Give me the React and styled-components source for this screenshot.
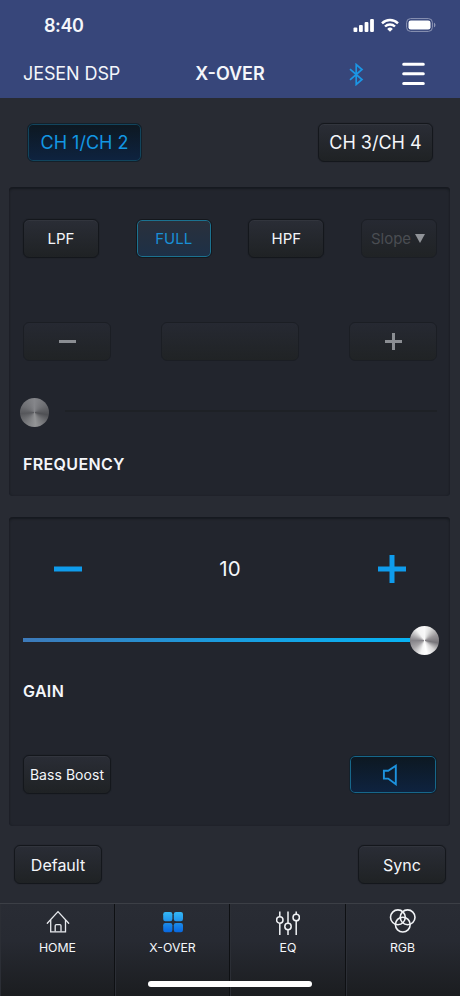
import React, { useState } from "react";
import styled, { createGlobalStyle, css } from "styled-components";

const GlobalStyle = createGlobalStyle`
  * {
    box-sizing: border-box;
  }

  body {
    margin: 0;
    background: #282b33;
    font-family: Inter, "Liberation Sans", sans-serif;
  }
`;

// Styled Components
const Screen = styled.div`
  width: 460px;
  height: 996px;
  display: flex;
  flex-direction: column;
  overflow: hidden;
  background: #282b33;
  color: #f4f6fa;
`;

const Header = styled.header`
  height: 98px;
  flex-shrink: 0;
  background: #37467a;
`;

const StatusBar = styled.div`
  height: 50px;
  padding: 1px 24px 0 44px;
  display: flex;
  align-items: center;
  justify-content: space-between;
`;

const Clock = styled.span`
  font-size: 18px;
  font-weight: 600;
  letter-spacing: -0.4px;
`;

const StatusIcons = styled.div`
  display: flex;
  align-items: center;
  gap: 7px;
  padding-bottom: 1px;

  svg {
    display: block;
  }
`;

const NavBar = styled.nav`
  height: 48px;
  padding: 0 35px 0 23px;
  display: grid;
  grid-template-columns: 142px 130px 1fr;
  align-items: center;
`;

const Brand = styled.span`
  font-size: 18px;
  line-height: 22px;
  white-space: nowrap;
  letter-spacing: -0.1px;
`;

const Title = styled.h1`
  margin: 0;
  font-size: 18px;
  line-height: 22px;
  font-weight: 600;
  text-align: center;
`;

const NavActions = styled.div`
  display: flex;
  align-items: center;
  justify-content: flex-end;
  gap: 38px;

  svg {
    display: block;
  }
`;

const Channels = styled.div`
  height: 89px;
  flex-shrink: 0;
  padding: 25px 27px 0 27px;
  display: flex;
  align-items: flex-start;
  justify-content: space-between;
`;

const activeStyle = css`
  color: #1397e3;
  background: linear-gradient(#0d1821, #0e2340);
  border-color: #14202a;
  box-shadow: inset 0 0 0 1px ${(props) => props.$glow || "#17678a"};
`;

const Button = styled.button`
  width: ${(props) => props.$width}px;
  height: 39px;
  padding: 0;
  display: flex;
  align-items: center;
  justify-content: center;
  flex-shrink: 0;
  font-family: inherit;
  font-size: ${(props) => props.$size || 16}px;
  letter-spacing: ${(props) => props.$spacing || 0}px;
  white-space: nowrap;
  color: #f4f6fa;
  background: linear-gradient(#2a2d36, #1f2224);
  border: 1px solid #14171c;
  border-radius: 6px;
  box-shadow: inset 0 1px 0 #32353d, 0 0 1px #14171c;
  cursor: pointer;

  ${(props) => props.$active && activeStyle}

  ${(props) =>
    props.$selected &&
    css`
      color: #198fd6;
      background: linear-gradient(#2a303b, #1d3047);
      box-shadow: inset 0 0 0 1px #1c7290;
    `}

  &:disabled {
    color: #4a4d52;
    background: linear-gradient(#262932, #202325);
    border-color: #1b1e24;
    box-shadow: none;
    cursor: default;
  }

  svg {
    display: block;
  }
`;

const Panel = styled.section`
  width: 441px;
  height: 309px;
  flex-shrink: 0;
  margin: 0 0 21px 9px;
  padding: 0 13px 0 14px;
  display: flex;
  flex-direction: column;
  background: #22252d;
  border-radius: 4px;
  box-shadow: inset 0 2px 2px #171a20, inset 0 0 2px #1b1e25;
`;

const Row = styled.div`
  display: flex;
  align-items: center;
  justify-content: space-between;
  margin-top: ${(props) => props.$top}px;
  height: 39px;
`;

const Slope = styled.span`
  display: flex;
  align-items: center;
  gap: 4px;
  padding-right: 2px;

  svg {
    color: #909398;
  }
`;

const Muted = styled.span`
  color: #8b8e93;
`;

const SpeakerSlot = styled.span`
  padding-right: 7px;
`;

const Slider = styled.div`
  display: flex;
  align-items: center;
  height: 30px;
  margin-top: ${(props) => props.$top}px;
`;

const Track = styled.div`
  flex: 1;
  height: 4px;
  background: linear-gradient(90deg, #3d7ab9, #1b9bdd 50%, #08b3f3);
`;

const IdleTrack = styled.div`
  flex: 1;
  height: 2px;
  margin: 0 0 3px 16px;
  background: #1e2126;
`;

const Knob = styled.div`
  width: 29px;
  height: 29px;
  flex-shrink: 0;
  margin: ${(props) => (props.$end ? "0 -2px 0 0" : "0 0 0 -3px")};
  border-radius: 50%;
  background: conic-gradient(
    #f8f8f8 0deg,
    #dedede 25deg,
    #9b989b 65deg,
    #77757a 100deg,
    #d5d4d5 135deg,
    #ffffff 170deg,
    #f5f5f5 195deg,
    #a8a6a9 235deg,
    #858388 270deg,
    #aaa8ab 290deg,
    #f3f3f3 325deg,
    #f8f8f8 360deg
  );

  ${(props) =>
    props.$dim &&
    css`
      background: conic-gradient(
        #85868a 0deg,
        #707175 50deg,
        #4f5054 100deg,
        #77787b 140deg,
        #939496 175deg,
        #7c7d80 215deg,
        #56575b 265deg,
        #6e6f73 300deg,
        #85868a 360deg
      );
    `}
`;

const Label = styled.h2`
  margin: ${(props) => props.$top}px 0 0;
  font-size: 16px;
  line-height: 20px;
  font-weight: 600;
  letter-spacing: 0.35px;
`;

const GainRow = styled.div`
  display: grid;
  grid-template-columns: 90px 1fr 90px;
  align-items: center;
  justify-items: center;
  height: 40px;
  margin-top: 31px;
`;

const StepButton = styled.button`
  padding: 1px 0 0;
  border: none;
  background: none;
  color: #0f9cec;
  cursor: pointer;

  svg {
    display: block;
  }
`;

const GainValue = styled.span`
  padding-top: 2px;
  font-size: 20.5px;
  line-height: 24px;
  letter-spacing: 0.2px;
`;

const Actions = styled.div`
  display: flex;
  justify-content: space-between;
  padding: 0 14px;
  margin-top: -2px;
`;

const TabBar = styled.nav`
  height: 93px;
  margin-top: auto;
  flex-shrink: 0;
  display: grid;
  grid-template-columns: 115px 115px 116px 1fr;
  position: relative;
  background: linear-gradient(#292c34, #272a32 40%, #1b1d20);
  border-top: 1px solid #3c3f46;
`;

const Tab = styled.div`
  display: flex;
  flex-direction: column;
  align-items: center;
  padding: 3px 0 0 1px;
  font-size: 12.3px;
  line-height: 16px;
  border-right: 1px solid #0e1013;
  box-shadow: inset 1px 0 0 #2b2e35;

  &:last-of-type {
    padding: 3px 1px 0 0;
    border-right: none;
  }

  svg {
    display: block;
    margin-bottom: 5px;
  }
`;

// Sits over the tabs, like the system bar does
const HomeIndicator = styled.span`
  position: absolute;
  left: 148px;
  bottom: 9px;
  width: 164px;
  height: 6px;
  border-radius: 3px;
  background: #ffffff;
`;

function Sign({ size, thickness, plus }) {
  const start = (size - thickness) / 2;
  return (
    <svg width={size} height={size} fill="currentColor">
      <rect x="0" y={start} width={size} height={thickness} />
      {plus && <rect x={start} y="0" width={thickness} height={size} />}
    </svg>
  );
}

function SignalIcon() {
  return (
    <svg width="21" height="13" viewBox="0 0 21 13" fill="white">
      <rect x="0.5" y="8.5" width="3.8" height="4.5" rx="1" />
      <rect x="6" y="6" width="3.8" height="7" rx="1" />
      <rect x="11.6" y="3" width="3.8" height="10" rx="1" />
      <rect x="17.1" y="0" width="3.8" height="13" rx="1" />
    </svg>
  );
}

function WifiIcon() {
  return (
    <svg width="18" height="14" viewBox="0 0 18 14" fill="none" stroke="white">
      <path d="M1 5.3a11.6 11.6 0 0 1 16 0" strokeWidth="2.5" />
      <path d="M4 8.5a7.2 7.2 0 0 1 10 0" strokeWidth="2.4" />
      <path d="M6.2 10.9a4 4 0 0 1 5.6 0L9 13.8z" fill="white" stroke="none" />
    </svg>
  );
}

function BatteryIcon() {
  return (
    <svg width="30" height="14" viewBox="0 0 30 14">
      <rect x="0.6" y="0.6" width="25.8" height="12.8" rx="4" fill="none" stroke="#8d96b5" />
      <rect x="2.5" y="2.5" width="22" height="9" rx="2.3" fill="white" />
      <path d="M28 4.7c1.9.6 1.9 4 0 4.6z" fill="#8d96b5" />
    </svg>
  );
}

function BluetoothIcon() {
  return (
    <svg width="15" height="23" viewBox="0 0 15 23" fill="none" stroke="#1b96e5" strokeWidth="1.7">
      <path d="M1 6.2l12 10.3-5.8 5V1.5l5.8 5L1 16.8" />
    </svg>
  );
}

function MenuIcon() {
  return (
    <svg width="23" height="24" stroke="white" strokeWidth="3" strokeLinecap="round">
      <path d="M1.7 2.2h19.6M1.7 11.8h19.6M1.7 21.5h19.6" />
    </svg>
  );
}

function SpeakerIcon() {
  return (
    <svg width="16" height="22" viewBox="0 0 16 22" fill="none" stroke="#1d93df" strokeWidth="1.9">
      <path d="M1.9 6.8h4.3l7.6-5v18.4l-7.6-5.6H1.9z" />
    </svg>
  );
}

function HomeIcon() {
  return (
    <svg width="24" height="28" viewBox="0 0 24 28" fill="none" stroke="#e8eaee" strokeWidth="1.3">
      <path d="M1.3 16.2L12 4.6l10.7 11.6" strokeLinecap="round" />
      <path d="M4.7 13v11.8h14.8V13" />
      <path d="M9.2 24.6v-5.8q0-1.2 1.2-1.2h3.4q1.2 0 1.2 1.2v5.8" />
    </svg>
  );
}

function CrossoverIcon() {
  return (
    <svg width="20" height="28" viewBox="0 0 20 28">
      <defs>
        <linearGradient id="tiles" x1="0" y1="5" x2="0" y2="25" gradientUnits="userSpaceOnUse">
          <stop offset="0" stopColor="#35b8f5" />
          <stop offset="1" stopColor="#0868e0" />
        </linearGradient>
      </defs>
      <g fill="url(#tiles)">
        <rect x="0.2" y="5" width="9.2" height="9.2" rx="2.2" />
        <rect x="10.8" y="5" width="9.2" height="9.2" rx="2.2" />
        <rect x="0.2" y="16" width="9.2" height="9.2" rx="2.2" />
        <rect x="10.8" y="16" width="9.2" height="9.2" rx="2.2" />
      </g>
    </svg>
  );
}

function EqIcon() {
  return (
    <svg width="24" height="28" viewBox="0 0 24 28" fill="none" stroke="#f1f3f6" strokeWidth="1.5">
      <path d="M3.8 4.5v5.2M3.8 16.2V28M12 4.5v11.8M12 22.7V28M20.2 4.5v2.8M20.2 13.8V28" />
      <circle cx="3.8" cy="13" r="3.2" />
      <circle cx="12" cy="19.5" r="3.2" />
      <circle cx="20.2" cy="10.5" r="3.2" />
    </svg>
  );
}

function RgbIcon() {
  return (
    <svg width="28" height="28" viewBox="0 0 28 28" fill="none" stroke="#f1f3f6" strokeWidth="1.6">
      <circle cx="8.9" cy="10.3" r="7.4" />
      <circle cx="18.6" cy="10.3" r="7.4" />
      <circle cx="13.8" cy="17.6" r="7.4" />
    </svg>
  );
}

const tabs = [
  { name: "HOME", icon: <HomeIcon /> },
  { name: "X-OVER", icon: <CrossoverIcon /> },
  { name: "EQ", icon: <EqIcon /> },
  { name: "RGB", icon: <RgbIcon /> },
];

function App() {
  const [channel, setChannel] = useState(1);
  const [filter, setFilter] = useState("FULL");
  const [gain, setGain] = useState(10);
  const [muted, setMuted] = useState(true);

  return (
    <Screen>
      <GlobalStyle />
      <Header>
        <StatusBar>
          <Clock>8:40</Clock>
          <StatusIcons>
            <SignalIcon />
            <WifiIcon />
            <BatteryIcon />
          </StatusIcons>
        </StatusBar>
        <NavBar>
          <Brand>JESEN DSP</Brand>
          <Title>X-OVER</Title>
          <NavActions>
            <BluetoothIcon />
            <MenuIcon />
          </NavActions>
        </NavBar>
      </Header>

      <Channels>
        <Button $width={115} $size={18} $active={channel === 1} $glow="#12455d" onClick={() => setChannel(1)}>
          CH 1/CH 2
        </Button>
        <Button $width={115} $size={18} $active={channel === 3} $glow="#12455d" onClick={() => setChannel(3)}>
          CH 3/CH 4
        </Button>
      </Channels>

      <Panel>
        <Row $top={32}>
          {["LPF", "FULL", "HPF"].map((name) => (
            <Button key={name} $width={76} $size={15} $selected={filter === name} onClick={() => setFilter(name)}>
              {name}
            </Button>
          ))}
          <Button $width={76} $size={15} disabled>
            <Slope>
              Slope
              <svg width="10" height="9" fill="currentColor">
                <path d="M0 0h10L5 9z" />
              </svg>
            </Slope>
          </Button>
        </Row>
        <Row $top={64}>
          <Button $width={88} disabled>
            <Muted>
              <Sign size={17} thickness={3} />
            </Muted>
          </Button>
          <Button $width={138} disabled />
          <Button $width={88} disabled>
            <Muted>
              <Sign size={17} thickness={3} plus />
            </Muted>
          </Button>
        </Row>
        <Slider $top={36}>
          <Knob $dim />
          <IdleTrack />
        </Slider>
        <Label $top={27}>FREQUENCY</Label>
      </Panel>

      <Panel>
        <GainRow>
          <StepButton onClick={() => setGain(gain - 1)}>
            <Sign size={28} thickness={5} />
          </StepButton>
          <GainValue>{gain}</GainValue>
          <StepButton onClick={() => setGain(gain + 1)}>
            <Sign size={28} thickness={5} plus />
          </StepButton>
        </GainRow>
        <Slider $top={37}>
          <Track />
          <Knob $end />
        </Slider>
        <Label $top={26}>GAIN</Label>
        <Row $top={54}>
          <Button $width={88} $size={14} $spacing={0.05}>
            Bass Boost
          </Button>
          <Button $width={88} $active={muted} onClick={() => setMuted(!muted)}>
            <SpeakerSlot>
              <SpeakerIcon />
            </SpeakerSlot>
          </Button>
        </Row>
      </Panel>

      <Actions>
        <Button $width={88}>Default</Button>
        <Button $width={88}>Sync</Button>
      </Actions>

      <TabBar>
        {tabs.map((tab) => (
          <Tab key={tab.name}>
            {tab.icon}
            {tab.name}
          </Tab>
        ))}
        <HomeIndicator />
      </TabBar>
    </Screen>
  );
}

export default App;
